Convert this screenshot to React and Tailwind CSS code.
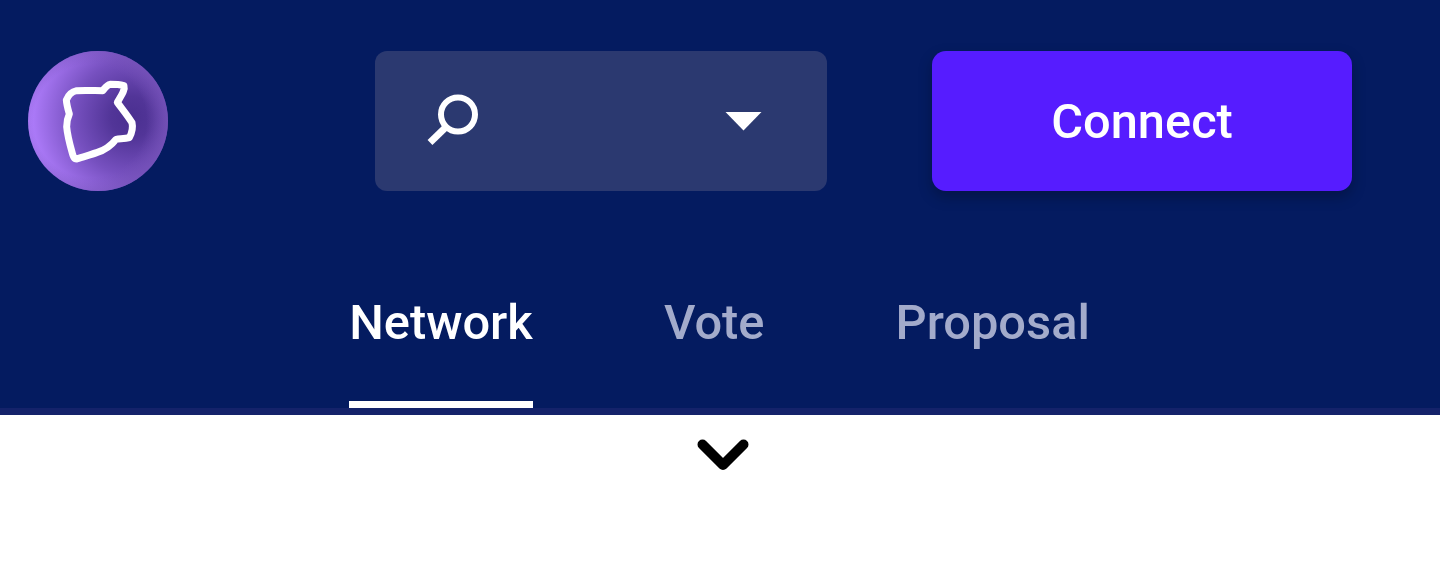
export default function App() {
  return (
    <div className="h-[577px] bg-white overflow-hidden font-['Roboto',sans-serif]">
      <header className="h-[415px] bg-[#041b60] border-b-[7px] border-[#14226a] flex flex-col">
        <div className="flex items-start pt-[51px] pl-[28px]">
          <svg width="140" height="140" viewBox="54 33 420 420" className="shrink-0">
            <defs>
              <radialGradient id="ball" gradientUnits="userSpaceOnUse" cx="365" cy="232" r="312">
                <stop offset="0" stopColor="#4a2f90" />
                <stop offset="0.2" stopColor="#523598" />
                <stop offset="0.55" stopColor="#7650bf" />
                <stop offset="1" stopColor="#b27fff" />
              </radialGradient>
              <radialGradient id="rim" gradientUnits="userSpaceOnUse" cx="240" cy="243" r="235">
                <stop offset="0.72" stopColor="#7552b8" stopOpacity="0" />
                <stop offset="1" stopColor="#7552b8" stopOpacity="0.85" />
              </radialGradient>
            </defs>
            <circle cx="264" cy="243" r="210" fill="url(#ball)" />
            <circle cx="264" cy="243" r="210" fill="url(#rim)" />
            <path
              d="M169 180 C175 165 185 155 200 152 C225 150 255 152 278 152 C285 145 290 135 300 133 C315 133 330 134 342 137 C346 150 335 165 322 187 C335 205 352 225 366 248 C370 265 365 280 358 293 C345 297 330 296 318 298 C305 315 285 330 260 338 C240 345 220 350 200 357 C192 357 190 350 187 340 C180 315 172 285 170 260 C170 245 172 235 178 222 C174 208 170 195 169 180 Z"
              fill="none"
              stroke="#ffffff"
              strokeWidth="21"
              strokeLinejoin="round"
            />
          </svg>
          <div className="ml-[207px] w-[452px] h-[140px] rounded-[12px] bg-[#2b3970] flex items-center justify-between pl-[52px] pr-[65px]">
            <svg width="54" height="54" viewBox="0 0 54 54">
              <circle cx="31" cy="20.5" r="17" fill="none" stroke="#ffffff" strokeWidth="6" />
              <path d="M19 33 L3 48.5" fill="none" stroke="#ffffff" strokeWidth="7" />
            </svg>
            <svg width="37" height="20" viewBox="0 0 37 20">
              <path d="M0.5 1 H36.5 L18.5 19.5 Z" fill="#ffffff" />
            </svg>
          </div>
          <button className="ml-[105px] w-[420px] h-[140px] pt-[2px] rounded-[14px] bg-[#561cff] text-white text-[48.8px] font-medium shadow-[0_6px_14px_rgba(0,0,0,0.25)]">
            Connect
          </button>
        </div>
        <nav className="mt-auto flex gap-[131px] pl-[349px] text-[48.8px] font-medium leading-[56px]">
          <a className="block text-white pb-[50px] border-b-[7px] border-white w-[184px] text-center">Network</a>
          <a className="block text-[#a3abcb] pb-[50px] border-b-[7px] border-transparent">Vote</a>
          <a className="block text-[#a3abcb] pb-[50px] border-b-[7px] border-transparent">Proposal</a>
        </nav>
      </header>
      <div className="flex justify-center pl-[6px] pt-[24px]">
        <svg width="52" height="32" viewBox="0 0 52 32">
          <path d="M5.5 5.5 L26 26 L46.5 5.5" fill="none" stroke="#000000" strokeWidth="10" strokeLinecap="round" strokeLinejoin="round" />
        </svg>
      </div>
    </div>
  );
}
